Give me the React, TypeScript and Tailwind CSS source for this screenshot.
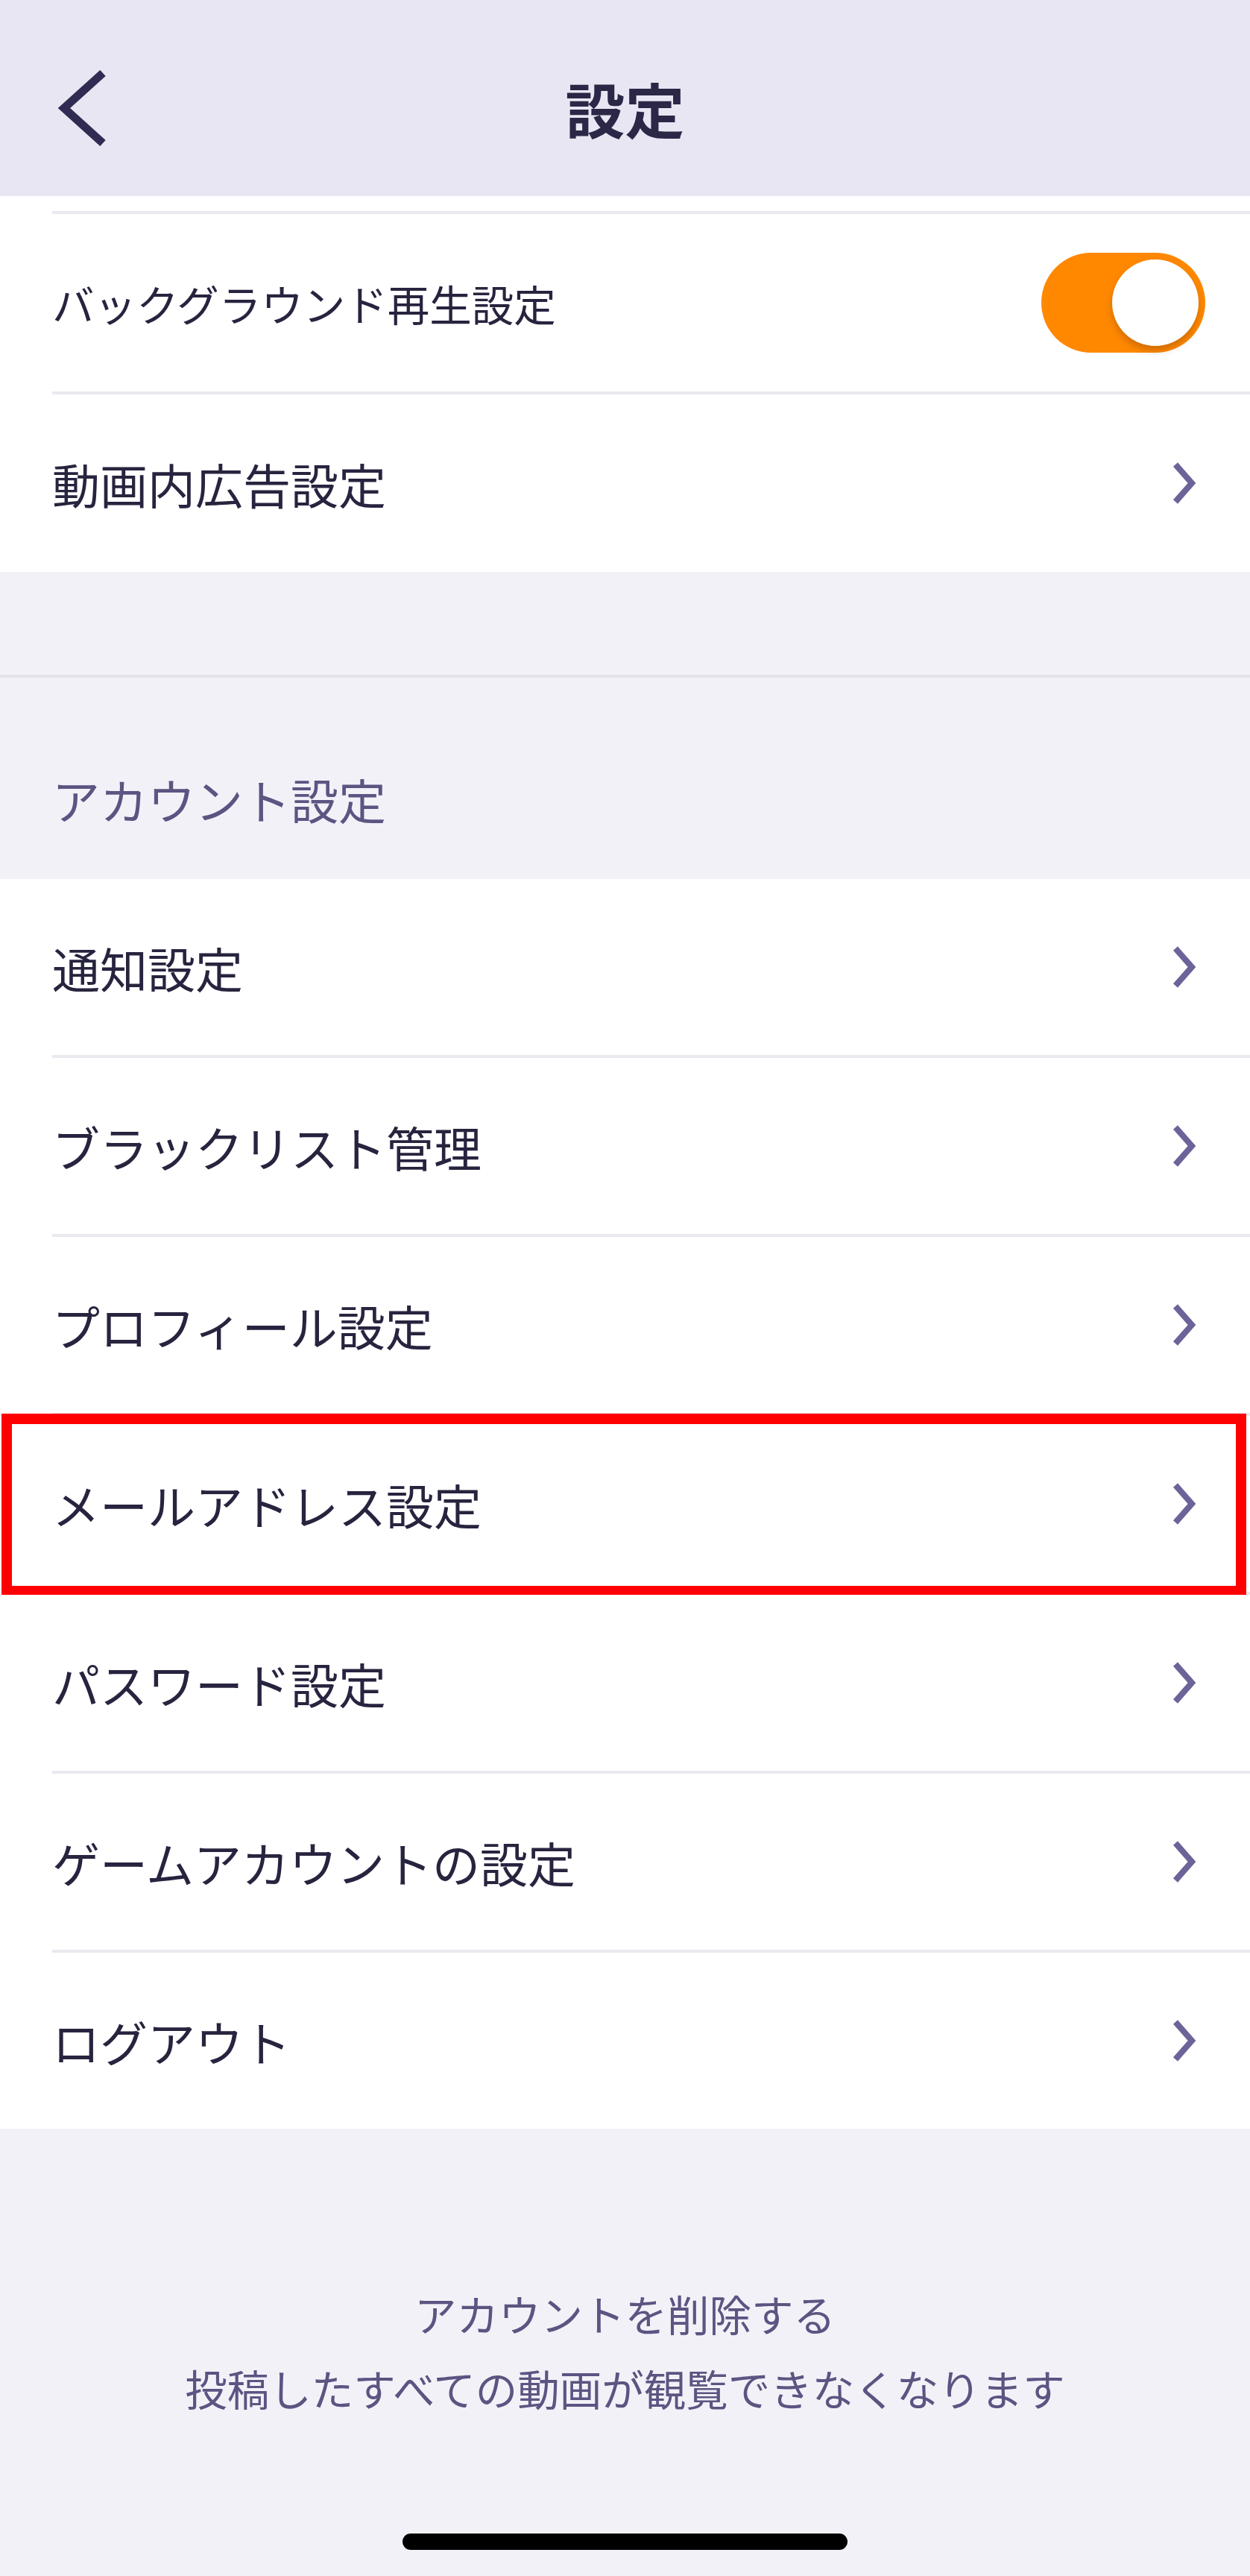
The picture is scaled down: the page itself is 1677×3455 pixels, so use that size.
import React from "react";

const FONT = "font-['Noto_Sans_CJK_JP','Noto_Sans',sans-serif]";

function Chevron() {
  return (
    <svg width="34" height="58" viewBox="0 0 34 58" className="overflow-visible">
      <polyline
        points="6,4 28,29 6,54"
        fill="none"
        stroke="#6b6499"
        strokeWidth="8"
        strokeLinejoin="miter"
      />
    </svg>
  );
}

function Separator({ full = false }: { full?: boolean }) {
  return (
    <div className={full ? "h-[4px] bg-[#e4e3ea]" : "ml-[70px] h-[4px] bg-[#eae9ef]"} />
  );
}

function LinkRow({ label, highlight = false }: { label: string; highlight?: boolean }) {
  return (
    <div className="relative flex h-[236px] items-center justify-between bg-white pl-[70px] pr-[72px]">
      <span className="text-[64px] leading-none text-[#27243f]">{label}</span>
      <Chevron />
      {highlight && (
        <div className="pointer-events-none absolute left-[2px] top-[-3px] h-[245px] w-[1670px] border-[14px] border-[#ff0000]" />
      )}
    </div>
  );
}

function Toggle() {
  return (
    <div className="flex h-[134px] w-[220px] items-center justify-end rounded-full bg-[#ff8800] pr-[9px]">
      <div className="h-[116px] w-[116px] rounded-full bg-white shadow-[0_6px_10px_rgba(120,60,0,0.35)]" />
    </div>
  );
}

export default function App() {
  const accountItems = [
    "通知設定",
    "ブラックリスト管理",
    "プロフィール設定",
    "メールアドレス設定",
    "パスワード設定",
    "ゲームアカウントの設定",
    "ログアウト",
  ];

  return (
    <div className={`${FONT} min-h-[3455px] w-full bg-[#f3f1f8]`}>
      {/* navigation bar */}
      <header className="relative flex h-[263px] items-center justify-center bg-[#e8e6f2]">
        <svg
          className="absolute left-[78px] top-[92px]"
          width="70"
          height="110"
          viewBox="0 0 70 110"
        >
          <polyline
            points="60,6 8,53 60,100"
            fill="none"
            stroke="#302b52"
            strokeWidth="11"
            strokeLinejoin="miter"
          />
        </svg>
        <h1 className="mt-[24px] text-[80px] font-bold leading-none text-[#2b2747]">設定</h1>
      </header>

      {/* playback section */}
      <section className="bg-white">
        <div className="h-[20px]" />
        <Separator />
        <div className="flex h-[238px] items-center justify-between pl-[70px] pr-[60px]">
          <span className="text-[56.5px] leading-none text-[#27243f]">バックグラウンド再生設定</span>
          <Toggle />
        </div>
        <Separator />
        <div className="flex h-[238px] items-center justify-between pl-[70px] pr-[72px]">
          <span className="text-[64px] leading-none text-[#27243f]">動画内広告設定</span>
          <Chevron />
        </div>
      </section>

      {/* account section header */}
      <div className="h-[138px]" />
      <Separator full />
      <div className="h-[270px] pl-[70px] pt-[130px]">
        <p className="text-[64px] leading-[64px] text-[#5b5582]">アカウント設定</p>
      </div>

      {/* account items */}
      <section className="bg-white">
        {accountItems.map((item, i) => (
          <React.Fragment key={item}>
            {i > 0 && <Separator />}
            <LinkRow label={item} highlight={item === "メールアドレス設定"} />
          </React.Fragment>
        ))}
      </section>

      {/* delete account */}
      <div className="flex flex-col items-center pt-[197px]">
        <p className="text-[56.5px] leading-[100px] text-[#5b5582]">アカウントを削除する</p>
        <p className="text-[56.5px] leading-[100px] text-[#5b5582]">
          投稿したすべての動画が観覧できなくなります
        </p>
        <div className="mt-[146px] h-[22px] w-[597px] rounded-full bg-black" />
      </div>
    </div>
  );
}
